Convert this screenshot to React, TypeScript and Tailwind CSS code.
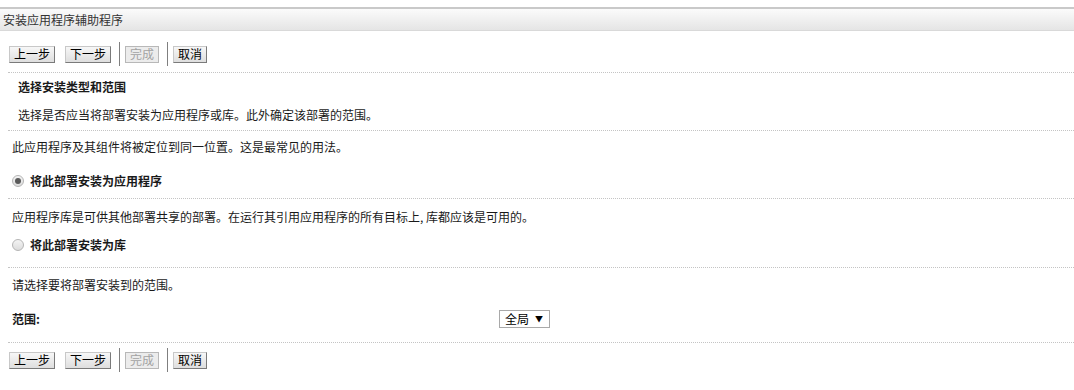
const cjk = { fontFamily: '"Noto Sans CJK SC", "Noto Sans", sans-serif' };

function Btn({ label, disabled }: { label: string; disabled?: boolean }) {
  return (
    <button
      disabled={disabled}
      className={
        disabled
          ? 'h-[17px] px-[4px] text-[12px] leading-[14px] text-[#a3a3a3] border border-[#b8b8b8] bg-[#ececec]'
          : 'h-[17px] px-[4px] text-[12px] leading-[14px] text-black border border-t-[#c8c8c8] border-l-[#c8c8c8] border-r-[#7a7a7a] border-b-[#7a7a7a] bg-gradient-to-b from-[#f7f7f7] to-[#dedede]'
      }
    >
      {label}
    </button>
  );
}

function Toolbar() {
  return (
    <div className="flex items-center h-[24px] pl-[9px]">
      <Btn label="上一步" />
      <div className="ml-[10px]">
        <Btn label="下一步" />
      </div>
      <div className="ml-[8px] mr-[5px] w-px h-[24px] bg-[#7f7f7f]" />
      <Btn label="完成" disabled />
      <div className="ml-[8px] mr-[5px] w-px h-[24px] bg-[#7f7f7f]" />
      <Btn label="取消" />
    </div>
  );
}

function Dotted() {
  return <div className="ml-[8px] border-t border-dotted border-[#c4c4c4]" />;
}

function Radio({ checked }: { checked?: boolean }) {
  return (
    <span className="w-[12px] h-[12px] rounded-full border border-[#b5b5b5] bg-gradient-to-b from-[#f4f4f4] to-[#dcdcdc] flex items-center justify-center">
      {checked && <span className="w-[6px] h-[6px] rounded-full bg-[#5a5a5a]" />}
    </span>
  );
}

export default function App() {
  return (
    <div className="w-[1074px] h-[390px] bg-white text-[12px] leading-[16px] text-[#1a1a1a] pt-[7px]" style={cjk}>
      {/* Header */}
      <div className="h-[24px] border-t-2 border-[#c9c9c9] border-b border-b-[#d9d9d9] bg-gradient-to-b from-[#fbfbfb] to-[#e5e5e5] flex items-center px-[3px] text-[#333]">
        安装应用程序辅助程序
      </div>

      <div className="mt-[11px]">
        <Toolbar />
      </div>

      <div className="mt-[6px]">
        <Dotted />
      </div>

      {/* Section header */}
      <div className="pl-[18px] pt-[6px] font-bold">选择安装类型和范围</div>
      <div className="pl-[18px] mt-[12px] pb-[7px]">选择是否应当将部署安装为应用程序或库。此外确定该部署的范围。</div>
      <Dotted />

      <div className="pl-[12px] pt-[8px]">此应用程序及其组件将被定位到同一位置。这是最常见的用法。</div>
      <div className="pl-[12px] mt-[18px] pb-[9px] flex items-center gap-[6px] font-bold">
        <Radio checked />
        <span>将此部署安装为应用程序</span>
      </div>
      <Dotted />

      <div className="pl-[12px] pt-[10px]">应用程序库是可供其他部署共享的部署。在运行其引用应用程序的所有目标上, 库都应该是可用的。</div>
      <div className="pl-[12px] mt-[12px] pb-[14px] flex items-center gap-[6px] font-bold">
        <Radio />
        <span>将此部署安装为库</span>
      </div>
      <Dotted />

      <div className="pl-[12px] pt-[9px]">请选择要将部署安装到的范围。</div>
      <div className="pl-[12px] mt-[17px] pb-[14px] flex items-center">
        <span className="w-[487px] font-bold">范围:</span>
        <div className="h-[18px] w-[51px] border border-[#a9a9a9] bg-white flex items-center pl-[5px] gap-[6px] text-[12px] text-black">
          <span>全局</span>
          <span className="text-[8px]">▼</span>
        </div>
      </div>
      <Dotted />

      <div className="mt-[5px]">
        <Toolbar />
      </div>
    </div>
  );
}
